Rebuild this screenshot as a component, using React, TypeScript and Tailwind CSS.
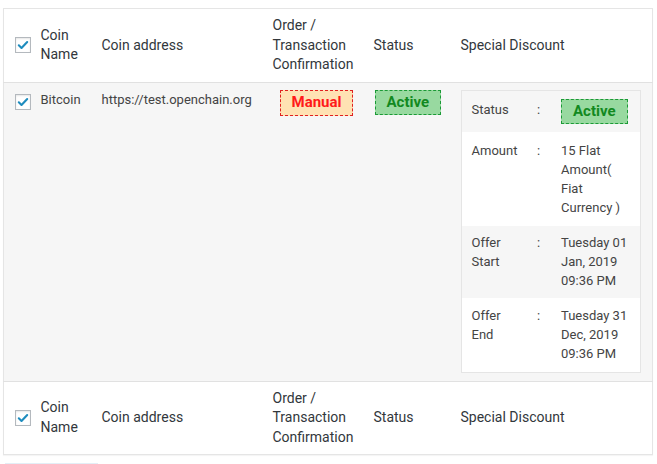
import React from "react";

function CheckBox() {
  return (
    <span className="inline-flex h-4 w-4 items-center justify-center border border-[#b4b9be] bg-white shadow-[inset_0_1px_2px_rgba(0,0,0,0.1)]">
      <svg viewBox="0 0 16 16" className="h-[14px] w-[14px]">
        <path d="M3.2 8.4 L6.3 11.4 L12.8 4.6" fill="none" stroke="#1e8cbe" strokeWidth="2.4" strokeLinecap="round" strokeLinejoin="round" />
      </svg>
    </span>
  );
}

function Badge({ label, tone }: { label: string; tone: "manual" | "active" }) {
  const cls =
    tone === "manual"
      ? "border-[#e02020] bg-[#ffe2b3] text-[#ff1a1a] px-[11px] h-[26px]"
      : "border-[#1b9a36] bg-[#98d9a0] text-[#12891f] px-[11px] h-[25px]";
  return (
    <span className={`inline-flex items-center border border-dashed text-[15px] font-bold leading-none ${cls}`}>
      {label}
    </span>
  );
}

function HeadRow({ border }: { border: string }) {
  return (
    <tr className={`bg-white h-[73px] ${border}`}>
      <td className="pl-[11px] pr-0 pt-[4px] align-middle">
        <CheckBox />
      </td>
      <th className="px-[10px] py-[7px] text-left font-normal align-middle">Coin Name</th>
      <th className="px-[10px] py-[7px] text-left font-normal align-middle">Coin address</th>
      <th className="pl-[10px] pr-[6px] py-[7px] text-left font-normal align-middle">Order / Transaction Confirmation</th>
      <th className="px-[10px] py-[7px] text-left font-normal align-middle">Status</th>
      <th className="px-[10px] py-[7px] text-left font-normal align-middle">Special Discount</th>
    </tr>
  );
}

const discount = [
  { label: "Status", value: null, bg: "bg-[#f6f6f6]", pad: "pt-[8px] pb-[8px]" },
  { label: "Amount", value: "15 Flat Amount( Fiat Currency )", bg: "bg-white", pad: "py-[9px]" },
  { label: "Offer Start", value: "Tuesday 01 Jan, 2019 09:36 PM", bg: "bg-[#f6f6f6]", pad: "pt-[7px] pb-[8px]" },
  { label: "Offer End", value: "Tuesday 31 Dec, 2019 09:36 PM", bg: "bg-white", pad: "pt-[8px] pb-[9px]" },
];

export default function App() {
  return (
    <div className="min-h-[464px] bg-white pt-[8px] font-['Roboto',_'Liberation_Sans',_sans-serif]">
      <table className="ml-[3px] w-[649px] table-fixed border-collapse border border-[#e5e5e5] text-[14px] leading-[19.5px] text-[#32373c] shadow-[0_1px_1px_rgba(0,0,0,0.04)]">
        <colgroup>
          <col className="w-[27px]" />
          <col className="w-[61px]" />
          <col className="w-[171px]" />
          <col className="w-[101px]" />
          <col className="w-[87px]" />
          <col className="w-[202px]" />
        </colgroup>
        <thead>
          <HeadRow border="border-b border-[#e1e1e1]" />
        </thead>
        <tbody>
          <tr className="bg-[#f6f6f6] text-[13px] leading-[19px] text-[#444]">
            <td className="pl-[11px] pr-0 pt-[11px] align-top">
              <CheckBox />
            </td>
            <td className="px-[10px] pt-[7px] align-top">Bitcoin</td>
            <td className="px-[10px] pt-[7px] align-top">https://test.openchain.org</td>
            <td className="px-[10px] pt-[7px] align-top">
              <span className="ml-[7px] inline-block">
                <Badge label="Manual" tone="manual" />
              </span>
            </td>
            <td className="px-[10px] pt-[7px] align-top">
              <span className="ml-[1px] inline-block">
                <Badge label="Active" tone="active" />
              </span>
            </td>
            <td className="pl-[10px] pr-[11px] pt-[7px] pb-[8px] align-top">
              <table className="w-[179px] table-fixed border-collapse border border-[#e5e5e5] text-[13px] leading-[19px] text-[#444]">
                <colgroup>
                  <col className="w-[76px]" />
                  <col className="w-[24px]" />
                  <col className="w-[79px]" />
                </colgroup>
                <tbody>
                  {discount.map((d) => (
                    <tr key={d.label} className={d.bg}>
                      <td className={`pl-[10px] pr-[14px] align-top ${d.pad} ${d.value === null ? "pt-[9px]" : ""}`}>
                        {d.label}
                      </td>
                      <td className={`pl-0 align-top ${d.pad} ${d.value === null ? "pt-[9px]" : ""}`}>:</td>
                      <td className={`pl-0 pr-[8px] align-top ${d.pad}`}>
                        {d.value === null ? <Badge label="Active" tone="active" /> : d.value}
                      </td>
                    </tr>
                  ))}
                </tbody>
              </table>
            </td>
          </tr>
        </tbody>
        <tfoot>
          <HeadRow border="border-t border-[#e1e1e1]" />
        </tfoot>
      </table>
      <div className="ml-[5px] mt-[8px] h-px w-[93px] bg-[#e3eef6]" />
    </div>
  );
}
